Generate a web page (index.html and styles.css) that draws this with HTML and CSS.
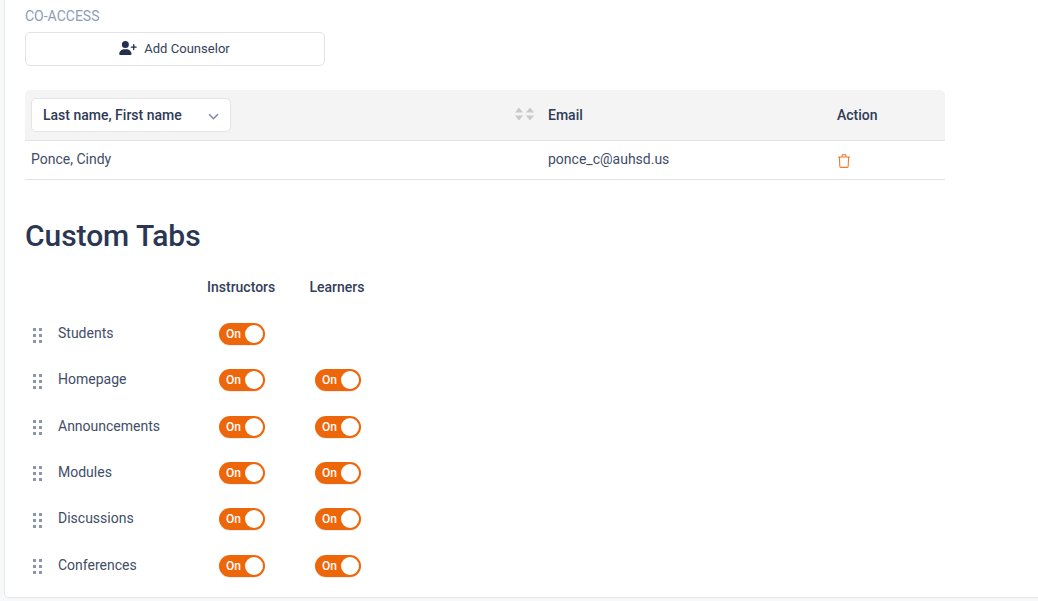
FILE: index.html
```html
<!DOCTYPE html>
<html lang="en">
<head>
<meta charset="utf-8">
<title>Custom Tabs</title>
<link rel="stylesheet" href="styles.css">
</head>
<body>
<main class="card">
  <div class="eyebrow">CO-ACCESS</div>
  <button class="add-btn" type="button">
    <svg class="add-icon" viewBox="0 0 640 512" width="18" height="14"><path fill="currentColor" d="M224 256a128 128 0 1 0 0-256 128 128 0 1 0 0 256zm-45.700 48C79.800 304 0 383.800 0 482.300 0 498.700 13.300 512 29.700 512h388.600c16.400 0 29.700-13.300 29.700-29.700C448 383.800 368.200 304 269.700 304h-91.400zM504 312v-64h-64c-13.300 0-24-10.700-24-24s10.700-24 24-24h64v-64c0-13.300 10.700-24 24-24s24 10.700 24 24v64h64c13.300 0 24 10.700 24 24s-10.700 24-24 24h-64v64c0 13.300-10.700 24-24 24s-24-10.700-24-24z"/></svg>
    <span>Add Counselor</span>
  </button>

  <section class="table">
    <div class="thead">
      <div class="name-col">
        <div class="select">
          <span class="head-text">Last name, First name</span>
          <svg class="chev" viewBox="0 0 12 8" width="11" height="7"><path d="M1 1.500l5 5 5-5" fill="none" stroke="#7c8aa5" stroke-width="1.800"/></svg>
        </div>
        <div class="sorts">
          <svg viewBox="0 0 8 14" width="8" height="14"><path fill="#c9c9cc" d="M4 0.500L8 5.500H0zM0 8.500h8L4 13.500z"/></svg>
          <svg viewBox="0 0 8 14" width="8" height="14"><path fill="#c9c9cc" d="M4 0.500L8 5.500H0zM0 8.500h8L4 13.500z"/></svg>
        </div>
      </div>
      <div class="email-col"><span class="head-text">Email</span></div>
      <div class="action-col"><span class="head-text">Action</span></div>
    </div>
    <div class="trow">
      <div class="name-col">Ponce, Cindy</div>
      <div class="email-col">ponce_c@auhsd.us</div>
      <div class="action-col">
        <svg class="trash" viewBox="0 0 12 14" width="12" height="14"><path fill="none" stroke="#ee7a2c" stroke-width="1.100" d="M0 3h12M3.800 3l.6-2.300h3.200L8.200 3M1.400 3l.4 9.300c0 .6.500 1.100 1.100 1.100h6.200c.6 0 1.100-.5 1.100-1.100L10.600 3"/></svg>
      </div>
    </div>
  </section>

  <h2 class="title">Custom Tabs</h2>

  <div class="tabs-head">
    <span class="col">Instructors</span>
    <span class="col">Learners</span>
  </div>

  <div class="tab-row">
    <span class="grip"><i></i><i></i><i></i><i></i><i></i><i></i></span>
    <span class="tab-name">Students</span>
    <span class="toggle"><b>On</b></span>
  </div>
  <div class="tab-row">
    <span class="grip"><i></i><i></i><i></i><i></i><i></i><i></i></span>
    <span class="tab-name">Homepage</span>
    <span class="toggle"><b>On</b></span>
    <span class="toggle"><b>On</b></span>
  </div>
  <div class="tab-row">
    <span class="grip"><i></i><i></i><i></i><i></i><i></i><i></i></span>
    <span class="tab-name">Announcements</span>
    <span class="toggle"><b>On</b></span>
    <span class="toggle"><b>On</b></span>
  </div>
  <div class="tab-row">
    <span class="grip"><i></i><i></i><i></i><i></i><i></i><i></i></span>
    <span class="tab-name">Modules</span>
    <span class="toggle"><b>On</b></span>
    <span class="toggle"><b>On</b></span>
  </div>
  <div class="tab-row">
    <span class="grip"><i></i><i></i><i></i><i></i><i></i><i></i></span>
    <span class="tab-name">Discussions</span>
    <span class="toggle"><b>On</b></span>
    <span class="toggle"><b>On</b></span>
  </div>
  <div class="tab-row">
    <span class="grip"><i></i><i></i><i></i><i></i><i></i><i></i></span>
    <span class="tab-name">Conferences</span>
    <span class="toggle"><b>On</b></span>
    <span class="toggle"><b>On</b></span>
  </div>
</main>
</body>
</html>
```

FILE: styles.css
```css
* { box-sizing: border-box; }

html, body {
  margin: 0;
  height: 601px;
  overflow: hidden;
  background: #f6f8fc;
}

body {
  padding: 0 0 3px 4px;
  font-family: Roboto, "Liberation Sans", sans-serif;
  font-size: 14px;
  color: #2a3654;
}

.card {
  height: 598px;
  padding: 8px 0 0 20px;
  background: #fff;
  border-left: 1px solid #e6e8ee;
  border-bottom: 1px solid #e2e4ea;
  border-bottom-left-radius: 5px;
}

.eyebrow {
  height: 16px;
  line-height: 16px;
  font-size: 14px;
  color: #8d9db8;
}

.add-btn {
  display: flex;
  align-items: center;
  justify-content: center;
  gap: 7px;
  width: 300px;
  height: 34px;
  margin: 8px 0 24px;
  padding: 0 1px 2px 0;
  background: #fff;
  border: 1px solid #e1e3e8;
  border-radius: 5px;
  font: 400 13px/1 Roboto, sans-serif;
  letter-spacing: 0.03px;
  color: #333e5a;
}

.add-icon { color: #232f4d; }

.table { width: 920px; }

.thead, .trow {
  display: grid;
  grid-template-columns: 517px 289px 114px;
  align-items: center;
}

.thead {
  height: 51px;
  background: #f4f4f4;
  border-bottom: 1px solid #e2e2e4;
  border-radius: 5px 5px 0 0;
  font-weight: 500;
  color: #2e3a57;
}

.head-text {
  display: block;
  margin-top: -1px;
}

.trow {
  height: 39px;
  border-bottom: 1px solid #e2e2e4;
  padding-bottom: 2px;
  color: #414d68;
}

.name-col {
  display: flex;
  align-items: center;
  justify-content: space-between;
  padding-left: 6px;
  padding-right: 6px;
}

.email-col { padding-left: 6px; }

.action-col { padding-left: 6px; }

.select {
  display: flex;
  align-items: center;
  justify-content: space-between;
  width: 200px;
  height: 34px;
  padding: 0 11px 0 11px;
  background: #fff;
  border: 1px solid #e3e4e8;
  border-radius: 5px;
}

.chev { margin-top: 2px; }

.sorts { display: flex; gap: 3px; margin: -2px 2px 0 0; }

.trash { display: block; margin: 3px 0 0 1px; }

.title {
  margin: 38px 0 24px;
  font-size: 30px;
  line-height: 36px;
  font-weight: 500;
  letter-spacing: -0.05px;
  color: #2b3653;
}

.tabs-head {
  display: flex;
  height: 20px;
  margin-bottom: 12.900px;
  padding-left: 182px;
  line-height: 18px;
  font-weight: 500;
  color: #333e5a;
}

.col { width: 68px; white-space: nowrap; }
.col + .col { margin-left: 34.500px; }

.tab-row {
  display: flex;
  align-items: center;
  height: 46.300px;
  padding-left: 8px;
}

.grip {
  display: grid;
  grid-template-columns: 3px 3px;
  grid-auto-rows: 3px;
  gap: 3px;
  width: 25px;
  height: 15px;
  margin-top: 2px;
}

.grip i { background: #8a96ad; }

.tab-name {
  width: 161px;
  margin-top: -2px;
  color: #414d68;
}

.toggle {
  display: block;
  position: relative;
  width: 46px;
  height: 22px;
  margin-right: 50px;
  padding-left: 7px;
  background: #ed670a;
  border-radius: 11px;
  box-shadow: 0 1px 1px rgba(0, 0, 0, 0.08);
}

.toggle b {
  display: block;
  font-size: 12px;
  font-weight: 500;
  line-height: 22px;
  color: #fff;
}

.toggle::after {
  content: "";
  position: absolute;
  top: 2px;
  right: 2px;
  width: 18px;
  height: 18px;
  background: #fff;
  border-radius: 50%;
}
```
